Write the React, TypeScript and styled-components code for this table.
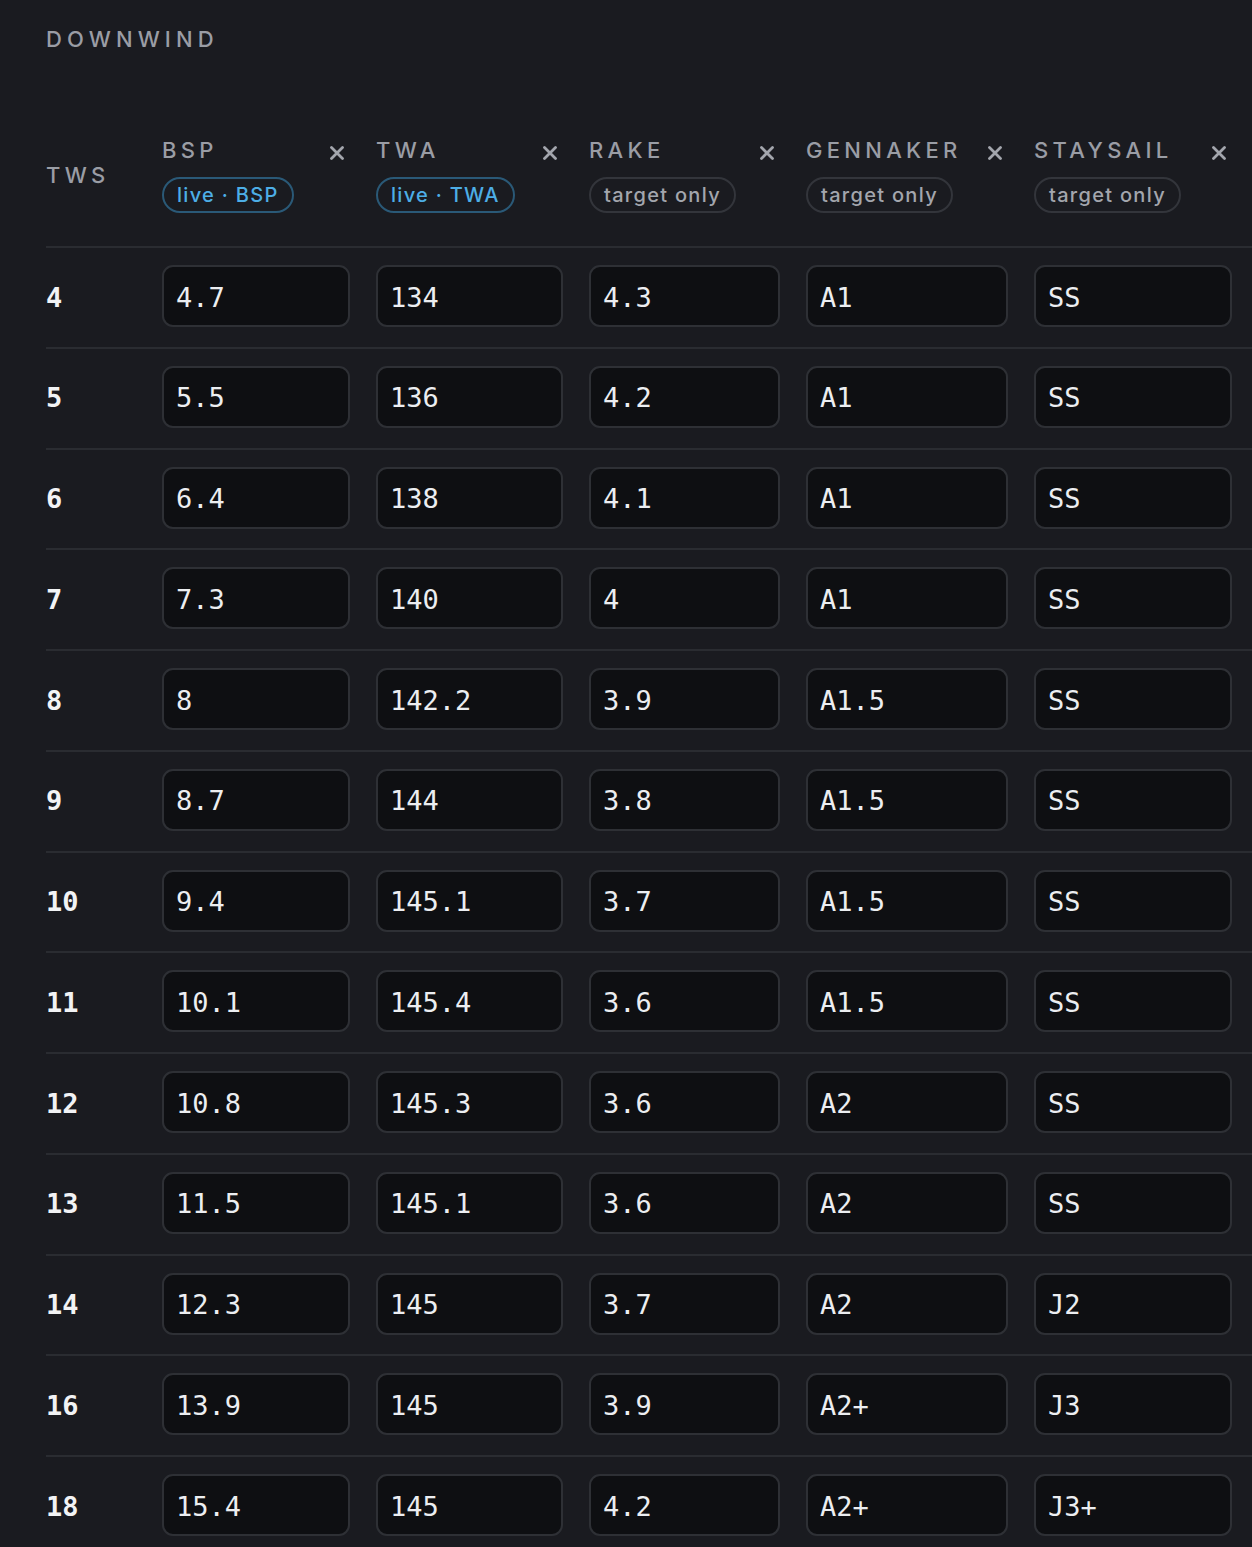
import React from "react";
import styled, { createGlobalStyle } from "styled-components";

const Global = createGlobalStyle`
  html, body { margin: 0; padding: 0; background: #1a1b20; }
  * { box-sizing: border-box; }
`;

const COLS = "90px 188px 187px 191px 202px 198px";

const Page = styled.div`
  min-height: 100vh;
  background: #1a1b20;
  padding: 25px 0 0 46px;
  font-family: Inter, "Noto Sans", sans-serif;
`;

const Title = styled.h2`
  margin: 0;
  font-size: 22px;
  line-height: 28px;
  font-weight: 500;
  letter-spacing: 5.1px;
  color: #9a9da5;
`;

const Table = styled.div`
  margin-top: 83px;
`;

const HeaderRow = styled.div`
  display: grid;
  grid-template-columns: ${COLS};
  column-gap: 26px;
  align-items: center;
  padding-bottom: 33px;
`;

const HeadLabel = styled.div`
  font-size: 22px;
  line-height: 28px;
  font-weight: 500;
  letter-spacing: 4.3px;
  color: #9a9da5;
  white-space: nowrap;
`;

const HeadCell = styled.div`
  display: flex;
  flex-direction: column;
  gap: 13px;
`;

const HeadTop = styled.div`
  display: flex;
  height: 28px;
  align-items: flex-start;
  justify-content: space-between;
`;

const CloseBtn = styled.button`
  width: 26px;
  height: 28px;
  padding: 6px 0 0;
  border: 0;
  background: transparent;
  display: flex;
  align-items: center;
  justify-content: center;
  color: #a3a6ad;
  cursor: pointer;
`;

const Badge = styled.span<{ $live?: boolean }>`
  align-self: flex-start;
  display: inline-flex;
  align-items: center;
  height: 36px;
  padding: 0 13px;
  border-radius: 18px;
  border: 2px solid ${(p) => (p.$live ? "#2a5977" : "#33353b")};
  color: ${(p) => (p.$live ? "#4daee6" : "#a3a6ad")};
  font-size: 20px;
  font-weight: 500;
  letter-spacing: 1.3px;
  white-space: nowrap;
`;

const Row = styled.div`
  display: grid;
  grid-template-columns: ${COLS};
  column-gap: 26px;
  align-items: center;
  border-top: 2px solid #2a2c31;
  padding: 17px 0 19.75px;
`;

const RowLabel = styled.div`
  font-family: "DejaVu Sans Mono", "Liberation Mono", monospace;
  font-weight: 700;
  font-size: 27px;
  color: #f2f3f5;
  padding-top: 2px;
`;

const Cell = styled.input`
  display: block;
  width: 100%;
  height: 62px;
  border: 2px solid #2e3035;
  border-radius: 11px;
  background: #0e0f12;
  color: #eceef1;
  padding: 2px 12px 0;
  font-family: "DejaVu Sans Mono", "Liberation Mono", monospace;
  font-size: 27px;
  outline: none;
`;

const XIcon = () => (
  <svg width="14" height="14" viewBox="0 0 14 14" fill="none">
    <path d="M1.5 1.5 L12.5 12.5 M12.5 1.5 L1.5 12.5" stroke="currentColor" strokeWidth="2.8" strokeLinecap="round" />
  </svg>
);

const columns: { name: string; badge: string; live: boolean }[] = [
  { name: "BSP", badge: "live · BSP", live: true },
  { name: "TWA", badge: "live · TWA", live: true },
  { name: "RAKE", badge: "target only", live: false },
  { name: "GENNAKER", badge: "target only", live: false },
  { name: "STAYSAIL", badge: "target only", live: false },
];

const rows: [string, string, string, string, string, string][] = [
  ["4", "4.7", "134", "4.3", "A1", "SS"],
  ["5", "5.5", "136", "4.2", "A1", "SS"],
  ["6", "6.4", "138", "4.1", "A1", "SS"],
  ["7", "7.3", "140", "4", "A1", "SS"],
  ["8", "8", "142.2", "3.9", "A1.5", "SS"],
  ["9", "8.7", "144", "3.8", "A1.5", "SS"],
  ["10", "9.4", "145.1", "3.7", "A1.5", "SS"],
  ["11", "10.1", "145.4", "3.6", "A1.5", "SS"],
  ["12", "10.8", "145.3", "3.6", "A2", "SS"],
  ["13", "11.5", "145.1", "3.6", "A2", "SS"],
  ["14", "12.3", "145", "3.7", "A2", "J2"],
  ["16", "13.9", "145", "3.9", "A2+", "J3"],
  ["18", "15.4", "145", "4.2", "A2+", "J3+"],
];

export default function App() {
  return (
    <Page>
      <Global />
      <Title>DOWNWIND</Title>
      <Table>
        <HeaderRow>
          <HeadLabel>TWS</HeadLabel>
          {columns.map((c) => (
            <HeadCell key={c.name}>
              <HeadTop>
                <HeadLabel>{c.name}</HeadLabel>
                <CloseBtn aria-label={`remove ${c.name}`}>
                  <XIcon />
                </CloseBtn>
              </HeadTop>
              <Badge $live={c.live}>{c.badge}</Badge>
            </HeadCell>
          ))}
        </HeaderRow>
        {rows.map((r) => (
          <Row key={r[0]}>
            <RowLabel>{r[0]}</RowLabel>
            {r.slice(1).map((v, i) => (
              <Cell key={i} defaultValue={v} />
            ))}
          </Row>
        ))}
      </Table>
    </Page>
  );
}
